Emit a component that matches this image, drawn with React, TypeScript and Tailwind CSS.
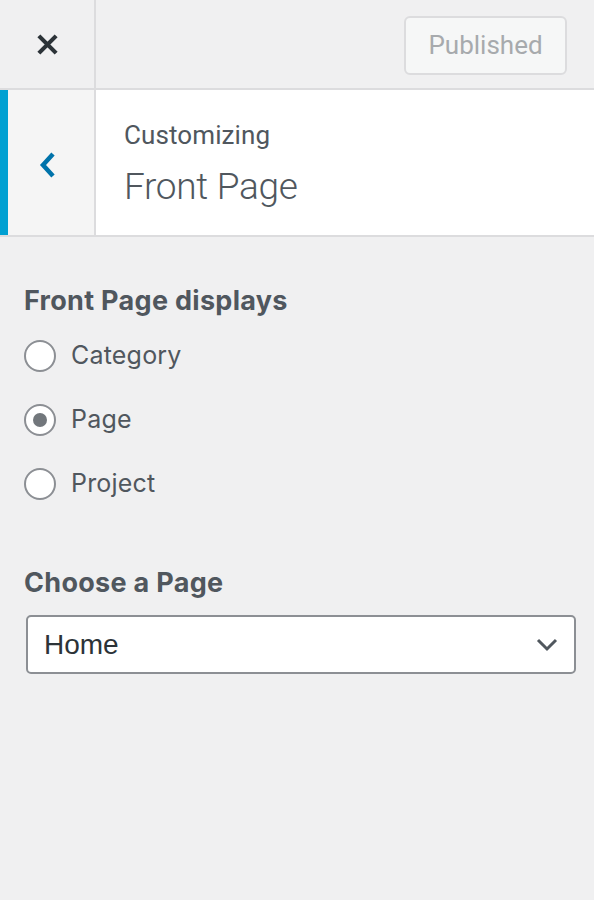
import React from 'react';

const Radio = ({ label, checked }: { label: string; checked?: boolean }) => (
  <label className="flex items-center h-[64px]">
    <span className="w-[32px] h-[32px] rounded-full border-[2px] border-[#8c8f94] bg-white flex items-center justify-center">
      {checked && <span className="w-[14px] h-[14px] rounded-full bg-[#72777c]" />}
    </span>
    <span className="ml-[15px] text-[25px] text-[#50575e] tracking-[0.2px]">{label}</span>
  </label>
);

const App: React.FC = () => {
  return (
    <div className="w-[594px] h-[900px] bg-[#f0f0f1] font-['Inter',sans-serif] overflow-hidden">
      {/* Top bar */}
      <div className="flex h-[90px] border-b-2 border-[#dcdcde]">
        <div className="w-[96px] border-r-2 border-[#dcdcde] flex items-center justify-center">
          <svg width="23" height="23" viewBox="0 0 24 24">
            <path d="M3 3 L21 21 M21 3 L3 21" stroke="#2c3338" strokeWidth="4.4" />
          </svg>
        </div>
        <div className="flex-1 flex items-start justify-end pt-[16px] pr-[27px]">
          <button className="w-[163px] h-[59px] rounded-[6px] border-2 border-[#dcdcde] bg-[#f6f7f7] text-[26px] text-[#a7aaad] font-['Roboto',sans-serif]">
            Published
          </button>
        </div>
      </div>

      {/* Section header */}
      <div className="flex h-[147px] border-b-2 border-[#dcdcde]">
        <div className="w-[96px] border-l-[8px] border-l-[#00a0d2] border-r-2 border-r-[#dcdcde] bg-[#f5f5f5] flex items-center justify-center">
          <svg width="18" height="28" viewBox="0 0 18 28" className="mt-[4px] ml-[-6px]">
            <path d="M14 3 L4 14 L14 25" fill="none" stroke="#0073aa" strokeWidth="4.5" />
          </svg>
        </div>
        <div className="flex-1 bg-white pl-[28px] pt-[28px] font-['Roboto',sans-serif]">
          <div className="text-[26px] leading-[34px] text-[#50575e] tracking-[0.1px]">Customizing</div>
          <div className="text-[37px] leading-[48px] font-light text-[#50575e] mt-[11px] tracking-[-0.3px]">Front Page</div>
        </div>
      </div>

      {/* Controls */}
      <div className="pl-[24px] pr-[18px] pt-[48px]">
        <div className="text-[27px] font-bold text-[#50575e] leading-[32px] tracking-[0.3px]">Front Page displays</div>
        <div className="mt-[7px]">
          <Radio label="Category" />
          <Radio label="Page" checked />
          <Radio label="Project" />
        </div>

        <div className="mt-[51px] text-[27px] font-bold text-[#50575e] leading-[32px] tracking-[0.3px]">Choose a Page</div>
        <div className="mt-[16px] ml-[2px] h-[59px] rounded-[5px] border-2 border-[#8c8f94] bg-white flex items-center justify-between pl-[16px] pr-[16px]">
          <span className="text-[28px] text-[#2c3338] font-['Liberation_Sans',sans-serif]">Home</span>
          <svg width="22" height="14" viewBox="0 0 22 14">
            <path d="M2 2 L11 11 L20 2" fill="none" stroke="#50575e" strokeWidth="3" />
          </svg>
        </div>
      </div>
    </div>
  );
};

export default App;
